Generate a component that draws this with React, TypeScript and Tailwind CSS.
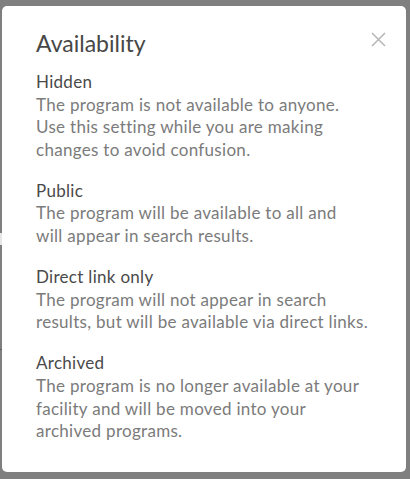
import React from 'react';

interface Option {
  title: string;
  lines: string[];
}

const options: Option[] = [
  {
    title: 'Hidden',
    lines: [
      'The program is not available to anyone.',
      'Use this setting while you are making',
      'changes to avoid confusion.',
    ],
  },
  {
    title: 'Public',
    lines: ['The program will be available to all and', 'will appear in search results.'],
  },
  {
    title: 'Direct link only',
    lines: ['The program will not appear in search', 'results, but will be available via direct links.'],
  },
  {
    title: 'Archived',
    lines: [
      'The program is no longer available at your',
      'facility and will be moved into your',
      'archived programs.',
    ],
  },
];

export default function App() {
  return (
    <div
      className="relative w-[410px] h-[479px] bg-[#7f7f7f] pt-[6px] pl-[2px] overflow-hidden"
      style={{ fontFamily: 'Lato, "Open Sans", sans-serif' }}
    >
      {/* underlying page bleeding through on the left edge */}
      <div className="absolute left-0 top-[233px] w-[2px] h-[12px] bg-[#e6e6e6]" />
      <div className="absolute left-0 top-[349px] w-[2px] h-[1px] bg-[#5f5f5f]" />

      <div className="w-[404px] h-[466px] bg-white rounded-[5px] pl-[34px] pr-[20px] pt-[20px]">
        <div className="flex items-start justify-between mb-[14px]">
          <h2 className="pt-[3px] text-[23px] leading-[28px] text-[#474747]">Availability</h2>
          <button className="mt-[6px] flex w-[15px] h-[15px]" aria-label="Close">
            <svg viewBox="0 0 15 15" width="15" height="15" className="block">
              <path d="M1 1L14 14M14 1L1 14" stroke="#b8b8b8" strokeWidth="1.6" fill="none" />
            </svg>
          </button>
        </div>

        <div className="flex flex-col gap-[18.5px]">
          {options.map((option) => (
            <div key={option.title} className="text-[17px] leading-[22.6px] tracking-[0.3px]">
              <div className="text-[#4a4a4a]">{option.title}</div>
              {option.lines.map((line) => (
                <div key={line} className="text-[#7b7b7b] whitespace-nowrap">
                  {line}
                </div>
              ))}
            </div>
          ))}
        </div>
      </div>
    </div>
  );
}
